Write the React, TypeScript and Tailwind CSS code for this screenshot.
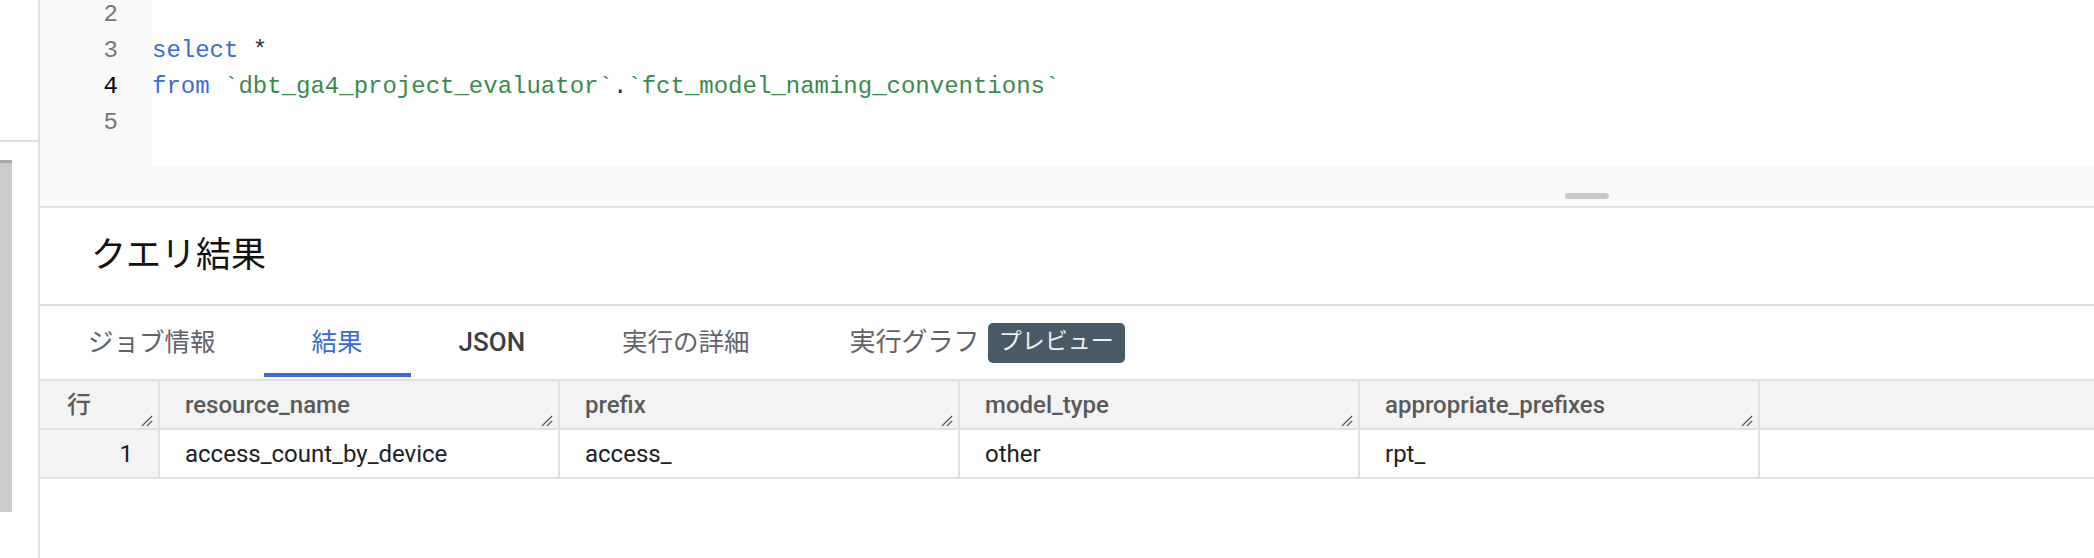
import React from "react";

const codeLines = [
  { n: 2, current: false, tokens: [] as { t: string; c: string }[] },
  {
    n: 3,
    current: false,
    tokens: [
      { t: "select", c: "text-[#3b6ad4]" },
      { t: " *", c: "text-[#333333]" },
    ],
  },
  {
    n: 4,
    current: true,
    tokens: [
      { t: "from", c: "text-[#3b6ad4]" },
      { t: " ", c: "" },
      { t: "`dbt_ga4_project_evaluator`", c: "text-[#3a8a4e]" },
      { t: ".", c: "text-[#333333]" },
      { t: "`fct_model_naming_conventions`", c: "text-[#3a8a4e]" },
    ],
  },
  { n: 5, current: false, tokens: [] },
];

const columns = [
  { key: "resource_name", value: "access_count_by_device" },
  { key: "prefix", value: "access_" },
  { key: "model_type", value: "other" },
  { key: "appropriate_prefixes", value: "rpt_" },
];

function Grip() {
  return (
    <svg
      className="absolute right-[4px] bottom-[1px]"
      width="14"
      height="14"
      viewBox="0 0 14 14"
      fill="none"
      stroke="#5a5a5a"
      strokeWidth="1.3"
    >
      <line x1="2" y1="13" x2="12" y2="3" />
      <line x1="7" y1="13" x2="12" y2="8" />
    </svg>
  );
}

export default function App() {
  return (
    <div className="flex h-[558px] w-[2094px] overflow-hidden bg-white font-['Roboto','Noto_Sans_CJK_JP',sans-serif]">
      {/* left panel */}
      <aside className="flex w-[40px] shrink-0 flex-col border-r-2 border-[#e0e0e0]">
        <div className="h-[142px] border-b-2 border-[#e0e0e0]" />
        <div className="mt-[18px] h-[352px] w-[12px] border-t-[3px] border-[#a9a9a9] bg-[#cbcbcb]" />
      </aside>

      <main className="flex min-w-0 flex-1 flex-col">
        {/* editor */}
        <section className="flex h-[208px] shrink-0 flex-col border-b-2 border-[#e0e0e0]">
          <div className="flex h-[166px] overflow-hidden">
            <div className="w-[112px] shrink-0 bg-[#f9f9f9]">
              <div className="-mt-[3px]">
                {codeLines.map((l) => (
                  <div
                    key={l.n}
                    className={`flex h-[36px] items-center justify-end pr-[34px] font-['Liberation_Mono',monospace] text-[24px] ${
                      l.current ? "text-black" : "text-[#777777]"
                    }`}
                  >
                    {l.n}
                  </div>
                ))}
              </div>
            </div>
            <div className="flex-1 bg-white">
              <div className="-mt-[3px]">
                {codeLines.map((l) => (
                  <div
                    key={l.n}
                    className="flex h-[36px] items-center whitespace-pre font-['Liberation_Mono',monospace] text-[24px]"
                  >
                    {l.tokens.map((tk, i) => (
                      <span key={i} className={tk.c}>
                        {tk.t}
                      </span>
                    ))}
                  </div>
                ))}
              </div>
            </div>
          </div>
          <div className="flex flex-1 items-end bg-[#fafafa] pb-[7px] pl-[1525px]">
            <div className="h-[6px] w-[44px] rounded-full bg-[#c8c8c8]" />
          </div>
        </section>

        {/* title */}
        <div className="flex h-[98px] shrink-0 items-center border-b-2 border-[#e0e0e0] pl-[51px] text-[35px] text-[#111111]">
          クエリ結果
        </div>

        {/* tabs */}
        <nav className="flex h-[73px] shrink-0 items-stretch text-[25.5px]">
          <div className="flex items-center px-[48px] text-[#5f6368]">ジョブ情報</div>
          <div className="relative flex items-center px-[48px] text-[#3b6ad4]">
            結果
            <div className="absolute right-0 bottom-[2px] left-0 h-[4px] bg-[#3b6ad4]" />
          </div>
          <div className="flex items-center px-[48px] text-[26px] font-medium text-[#3c4043]">JSON</div>
          <div className="flex items-center px-[49px] text-[#5f6368]">実行の詳細</div>
          <div className="flex items-center pl-[51px] text-[26px] text-[#5f6368]">
            実行グラフ
            <span className="ml-[8px] flex h-[40px] items-center rounded-[5px] bg-[#485a66] px-[11px] text-[23px] text-[#eef0f2]">
              プレビュー
            </span>
          </div>
        </nav>

        {/* results table */}
        <div className="flex h-[51px] shrink-0 border-y-2 border-[#e0e0e0] bg-[#f3f3f3] text-[24px] font-medium text-[#5a5a5a]">
          <div className="relative flex w-[120px] shrink-0 items-center border-r-2 border-[#e0e0e0] pl-[27px]">
            行
            <Grip />
          </div>
          {columns.map((c) => (
            <div
              key={c.key}
              className="relative flex w-[400px] shrink-0 items-center border-r-2 border-[#e0e0e0] pl-[25px]"
            >
              {c.key}
              <Grip />
            </div>
          ))}
          <div className="flex-1" />
        </div>
        <div className="flex h-[49px] shrink-0 border-b-2 border-[#e0e0e0] text-[24px] text-[#202124]">
          <div className="flex w-[120px] shrink-0 items-center justify-end border-r-2 border-[#e0e0e0] bg-[#f3f3f3] pr-[25px]">
            1
          </div>
          {columns.map((c) => (
            <div
              key={c.key}
              className="flex w-[400px] shrink-0 items-center border-r-2 border-[#e0e0e0] pl-[25px]"
            >
              {c.value}
            </div>
          ))}
          <div className="flex-1" />
        </div>
      </main>
    </div>
  );
}
